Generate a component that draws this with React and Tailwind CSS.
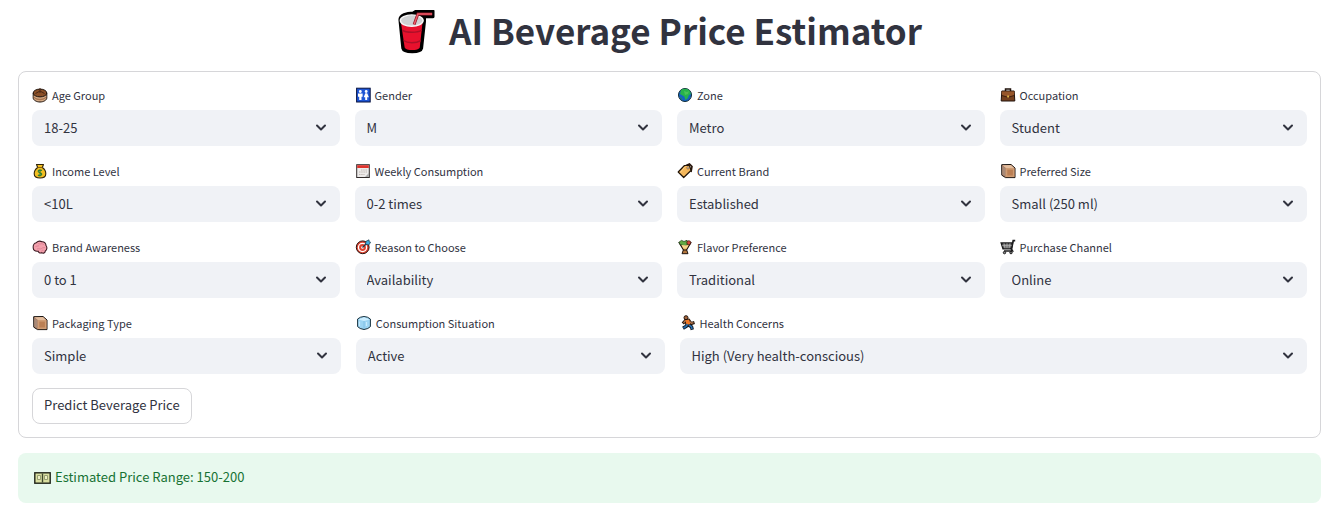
import React, { useId } from "react";

const FONT = "font-['Noto_Sans_CJK_SC','Source_Sans_Pro',sans-serif]";

function Icon({ children, className = "size-4" }) {
  return (
    <svg viewBox="0 0 16 16" className={`shrink-0 ${className}`} aria-hidden="true">
      {children}
    </svg>
  );
}

const box = (
  <Icon>
    <path d="M1.700 1.700 11 1.500 15 5v9.600H5.500L1.800 12.200Z" fill="#a9745a" stroke="#171310" strokeWidth="1" strokeLinejoin="round" />
    <path d="M2.200 2.200 10.900 2l3.300 3H5.800Z" fill="#e3bd9d" />
    <path d="M2.200 2.700 5.600 5.300v8.300L2.300 11.800Z" fill="#a88a78" />
    <path d="M5.600 5h8.900v9.100H5.600Z" fill="#cf9c73" />
    <path d="M7.300 6.600h5.600v5.900H7.300Z" fill="#bb7f54" />
  </Icon>
);

const icons = {
  cake: (
    <Icon>
      <path d="M1.200 6v5c0 2 3.200 4 6.800 4s6.800-2 6.800-4V6Z" fill="#d7ad88" stroke="#1d120c" strokeWidth="1" />
      <path d="M1.500 8.800c1 2.100 3.700 3 6.500 3s5.500-.9 6.500-3v1.400c-1 2-3.700 3-6.500 3s-5.500-1-6.500-3Z" fill="#a87550" />
      <ellipse cx="8" cy="6" rx="6.800" ry="3.900" fill="#8b5028" stroke="#1d120c" strokeWidth="1" />
      <path d="M3.500 6.500 8 4l4.500 2.500M8 1v5" fill="none" stroke="#4a2815" strokeWidth="1" />
    </Icon>
  ),
  restroom: (
    <Icon>
      <rect x="1.600" y="1.200" width="13.600" height="13.800" fill="#1d55d5" stroke="#09133f" strokeWidth="1" />
      <circle cx="5.300" cy="4.500" r="1.400" fill="#fff" />
      <path d="M3 6.500h4.600v3.300H6.500V13H4.200V9.800H3Z" fill="#fff" />
      <circle cx="11.200" cy="4.500" r="1.400" fill="#fff" />
      <path d="M10.300 6.300h1.900l1.700 4h-1.700V13h-2v-2.700H8.700Z" fill="#fff" />
    </Icon>
  ),
  globe: (
    <Icon>
      <circle cx="8" cy="8" r="6.500" fill="#1565c0" stroke="#102a34" strokeWidth="1" />
      <path d="M4 3c3-2 6.500-1.300 8.600.5L14 7l-2 1-1.500 3.500L8.500 13 7.300 9.500 3 7Z" fill="#27b34b" />
      <path d="m3 10 2 1v2Z" fill="#20964c" />
      <path d="m7 4 3 1 2-1-1 3-3 1Z" fill="#49c456" />
    </Icon>
  ),
  briefcase: (
    <Icon>
      <path d="M5.500 4V1.900h5V4" fill="none" stroke="#21130d" strokeWidth="1.500" />
      <path d="M1.800 4h12.400l.6 10H1.200Z" fill="#74401f" stroke="#21130d" strokeWidth="1" />
      <path d="M1.700 4.500h12.600L14 8.500 8 10.300 2 8.500Z" fill="#96562b" />
      <path d="m1.800 8.500 6.200 1.800 6.200-1.800" fill="none" stroke="#40200f" />
      <rect x="7.200" y="8.500" width="1.800" height="2" fill="#e2b64b" />
    </Icon>
  ),
  money: (
    <Icon>
      <path d="M4.500 1.500h7l-1.200 3c2.300 1.500 3.500 4 3.500 6.200 0 3-2 4.300-5.800 4.300s-5.800-1.300-5.800-4.300c0-2.200 1.200-4.700 3.500-6.200Z" fill="#f3bf22" stroke="#302509" strokeWidth="1.100" strokeLinejoin="round" />
      <path d="M5.500 4.500h5" stroke="#89600e" />
      <path d="M10 7.400c-3-1-4.300.4-3.500 1.600.8 1 3 .8 3.200 2.200.2 1.300-2 1.800-3.800.9M8 6.200v7.300" fill="none" stroke="#328034" strokeWidth="1.200" />
    </Icon>
  ),
  calendar: (
    <Icon>
      <rect x="1.700" y="1.700" width="12.600" height="12.800" fill="#edebea" stroke="#312b2b" />
      <path d="M2.200 2.200h11.600V5H2.200Z" fill="#df332c" />
      <path d="M4 11.500h5.500M4 9h8M6 7h6" stroke="#c2b8b4" strokeWidth="1.200" strokeDasharray="1.500 .7" />
      <path d="m10 14 4-4v4Z" fill="#aaa" />
    </Icon>
  ),
  tag: (
    <Icon>
      <path d="M9 2.500 12.500 1 15 3.500 14 9" fill="none" stroke="#28150b" strokeWidth="1.600" />
      <path d="M7.500 2.500h5l1.500 5-7.300 7L1.200 9Z" fill="#f4b75b" stroke="#211408" strokeWidth="1.200" strokeLinejoin="round" />
      <path d="M7.700 4 3.300 9.500" stroke="#ffd58c" />
      <circle cx="11" cy="4.900" r="1.100" fill="#fff" stroke="#65401c" strokeWidth=".7" />
    </Icon>
  ),
  box,
  brain: (
    <Icon>
      <path d="M1.200 9C.8 6 2.500 4 4.300 3.700 6 2 8.500 2 10 2.800c2.500-.2 4 2 4 3.700 1.600 2 .9 4.500-.7 5.500 0 2-2 2.500-3.700 1.700-1.800.8-3-.3-3.500-1.500C3.500 12.500 1.500 11.300 1.200 9Z" fill="#f3a0ac" stroke="#3c1821" strokeWidth="1.100" />
      <path d="M3.500 8c1-2 2.500 0 3.500-1.500M6 4.500c1 0 1.500 1 3 .3 1.500-.7 2 1 3 .7M5 10c2-1 3 .7 4.500-.5s2-.5 3.500-1M9.500 12.500c.2-1 1-1.500 2-1.300" fill="none" stroke="#d97c90" strokeWidth=".8" />
    </Icon>
  ),
  target: (
    <Icon>
      <circle cx="7.700" cy="8.300" r="6.400" fill="#df4330" stroke="#28110e" strokeWidth="1" />
      <circle cx="7.500" cy="8.500" r="4.100" fill="none" stroke="#fff" strokeWidth="1.300" />
      <circle cx="7.500" cy="8.500" r="1.300" fill="#fff" />
      <path d="M7.500 8.500 12 4" stroke="#173546" strokeWidth="1.200" />
      <path d="m10.500 5.300.5-3 3-1.500.2 2 1.400.4-1.700 2.700Z" fill="#41aee0" stroke="#193b4a" strokeWidth=".7" />
    </Icon>
  ),
  drink: (
    <Icon>
      <path d="M6.500 10.500 5 14.700h6L9.500 10.500Z" fill="#b6783e" stroke="#201610" />
      <path d="M2 3.500h12L9.500 11h-3Z" fill="#e9ae54" stroke="#201610" strokeWidth="1.200" strokeLinejoin="round" />
      <path d="M2 3.200 4.500 1.400 7 2.500l3-1.200L11 5 8 7 3 5.500Z" fill="#62a943" stroke="#26451c" strokeWidth=".8" />
      <circle cx="11.800" cy="3.700" r="2" fill="#d4453a" stroke="#33150d" strokeWidth=".7" />
      <path d="m4.500 6 7 .5-2 3h-3Z" fill="#f5d58d" />
    </Icon>
  ),
  cart: (
    <Icon>
      <path d="M15.200 1.700h-2l-1.700 8.500 1 1.800H4" fill="none" stroke="#1b1b1c" strokeWidth="1.700" />
      <path d="M1.200 4h11.300l-1.200 5.700H3Z" fill="#666" stroke="#1b1b1c" strokeWidth="1.400" />
      <path d="M4 4.300 5 9.500M7 4.300v5.200M10 4.300 9 9.500M2.200 6.700h9.500" stroke="#b5b5b5" strokeWidth=".8" />
      <circle cx="4.500" cy="13.600" r="1.200" fill="#888" stroke="#1b1b1c" />
      <circle cx="11" cy="13.600" r="1.200" fill="#888" stroke="#1b1b1c" />
    </Icon>
  ),
  ice: (
    <Icon>
      <path d="M1.600 4 4.500 2.200 8 1.500l3.500.7L14.400 4v7.600l-2.600 1.900-3.800 1-3.800-1-2.600-1.900Z" fill="#9cd4f3" stroke="#18313e" strokeWidth="1" strokeLinejoin="round" />
      <path d="m2.400 4.400 5.600-2.200 5.600 2.200L8 6Z" fill="#cdeeff" />
      <path d="M8 6v7.800" fill="none" stroke="#7fbfe4" strokeWidth=".9" />
      <path d="M3.500 6.500v4.500M10.500 7v4" stroke="#c6ebfd" strokeWidth="1.200" />
    </Icon>
  ),
  runner: (
    <Icon>
      <path d="m7.500 8-.8 3-3.700 2.200M8.500 10l3 1.700.8 3" fill="none" stroke="#111b29" strokeWidth="3.400" strokeLinejoin="round" />
      <path d="m5.500 5.500-2.700 3M9 6l2.500 2.500 3-1" fill="none" stroke="#1f120b" strokeWidth="3" />
      <path d="M4.500 4.500 9.500 4l1.500 5.500-4.700 1Z" fill="#f27824" stroke="#28150b" />
      <path d="m7.500 9-1 2-3 2.200M9 10l2.500 1.700.5 2.300" fill="none" stroke="#246fb2" strokeWidth="1.600" />
      <path d="m5.500 5.500-2 2.400M9.500 6.500l2 1.800 2-.6" fill="none" stroke="#b9784d" strokeWidth="1.300" />
      <circle cx="6" cy="2.700" r="2" fill="#a5653c" stroke="#1f120b" />
    </Icon>
  ),
};

const fields = [
  ["cake", "Age Group", "18-25"],
  ["restroom", "Gender", "M"],
  ["globe", "Zone", "Metro"],
  ["briefcase", "Occupation", "Student"],
  ["money", "Income Level", "<10L"],
  ["calendar", "Weekly Consumption", "0-2 times"],
  ["tag", "Current Brand", "Established"],
  ["box", "Preferred Size", "Small (250 ml)"],
  ["brain", "Brand Awareness", "0 to 1"],
  ["target", "Reason to Choose", "Availability"],
  ["drink", "Flavor Preference", "Traditional"],
  ["cart", "Purchase Channel", "Online"],
];

const lastFields = [
  ["box", "Packaging Type", "Simple"],
  ["ice", "Consumption Situation", "Active"],
  ["runner", "Health Concerns", "High (Very health-conscious)"],
];

function Field({ icon, label, value }) {
  const id = useId();
  return (
    <div className="min-w-0">
      <label htmlFor={id} className="mb-1.5 flex h-[18px] items-center gap-1 text-[11px] leading-4">
        {icons[icon]}
        <span className="pb-px">{label}</span>
      </label>
      <div className="relative">
        <select id={id} className="h-9 w-full appearance-none rounded-lg bg-[#f0f2f6] pr-9 pl-3 text-[13px] leading-5">
          <option>{value}</option>
        </select>
        <svg viewBox="0 0 12 8" className="pointer-events-none absolute top-[14px] right-[13px] h-2 w-3" aria-hidden="true">
          <path d="m2 1.500 4 4 4-4" fill="none" stroke="#31333f" strokeWidth="2" strokeLinecap="round" strokeLinejoin="round" />
        </svg>
      </div>
    </div>
  );
}

function Cup() {
  return (
    <svg viewBox="0 0 40 46" className="h-11 w-[38px] shrink-0" aria-hidden="true">
      <path d="M3 10c0-5 7-7 14-7l3-2h18v6H29v5l-3 28c-1 5-19 5-20 0Z" fill="#000" stroke="#000" strokeWidth="3" strokeLinejoin="round" />
      <path d="M4 12h23l-3 27c-1 4-15 4-16 0Z" fill="#e8112d" />
      <path d="M5.500 21c4 3 16 3 20.500 0M7 32c4 3 13 3 18 0" fill="none" stroke="#ad1028" strokeWidth="1.500" />
      <ellipse cx="15.500" cy="11" rx="12" ry="6" fill="#d0d1d3" stroke="#f7f7f7" strokeWidth="1.500" />
      <path d="m18 15 4-11h15" fill="none" stroke="#8f1927" strokeWidth="3" />
      <path d="m18 15 4-11h15" fill="none" stroke="#f25b69" strokeWidth="1.500" />
    </svg>
  );
}

export default function App() {
  return (
    <main className={`${FONT} bg-white px-[18px] pt-2 pb-3 text-[#31333f]`}>
      <h1 className="mb-[15px] flex h-12 items-center justify-center gap-3.5 pr-5 text-[35px] leading-[44px] font-bold">
        <Cup />
        <span className="pb-1">AI Beverage Price Estimator</span>
      </h1>
      <form className="rounded-lg border border-[#d6d6d9] px-[13px] pt-[14px] pb-[13px]" onSubmit={(e) => e.preventDefault()}>
        <div className="grid grid-cols-4 gap-x-[15px] gap-y-4">
          {fields.map(([icon, label, value]) => (
            <Field key={label} icon={icon} label={label} value={value} />
          ))}
        </div>
        <div className="mt-4 grid grid-cols-[309fr_309fr_628fr] gap-x-[15px]">
          {lastFields.map(([icon, label, value]) => (
            <Field key={label} icon={icon} label={label} value={value} />
          ))}
        </div>
        <button type="submit" className="mt-[14px] block h-9 rounded-lg border border-[#d6d6d9] bg-white px-[11px] pb-0.5 text-[13px] leading-5">
          Predict Beverage Price
        </button>
      </form>
      <div role="status" className="mt-[15px] flex h-[50px] items-center gap-1 rounded-lg bg-[#e8f9ee] px-4 text-[13px] leading-5 text-[#177233]">
        <svg viewBox="0 0 17 12" className="h-3 w-[17px] shrink-0" aria-hidden="true">
          <rect x=".8" y=".8" width="15.400" height="10.400" fill="#d9dfa0" stroke="#20251a" strokeWidth="1.400" />
          <path d="M3.500 3.500h3v4h-3ZM10.500 3.500h3v4h-3Z" fill="#eef0c4" stroke="#8d966a" strokeWidth=".9" />
          <path d="M8.500 1.500v9" stroke="#3d472d" strokeWidth="1.400" />
        </svg>
        <span className="pb-0.5">Estimated Price Range: 150-200</span>
      </div>
    </main>
  );
}
